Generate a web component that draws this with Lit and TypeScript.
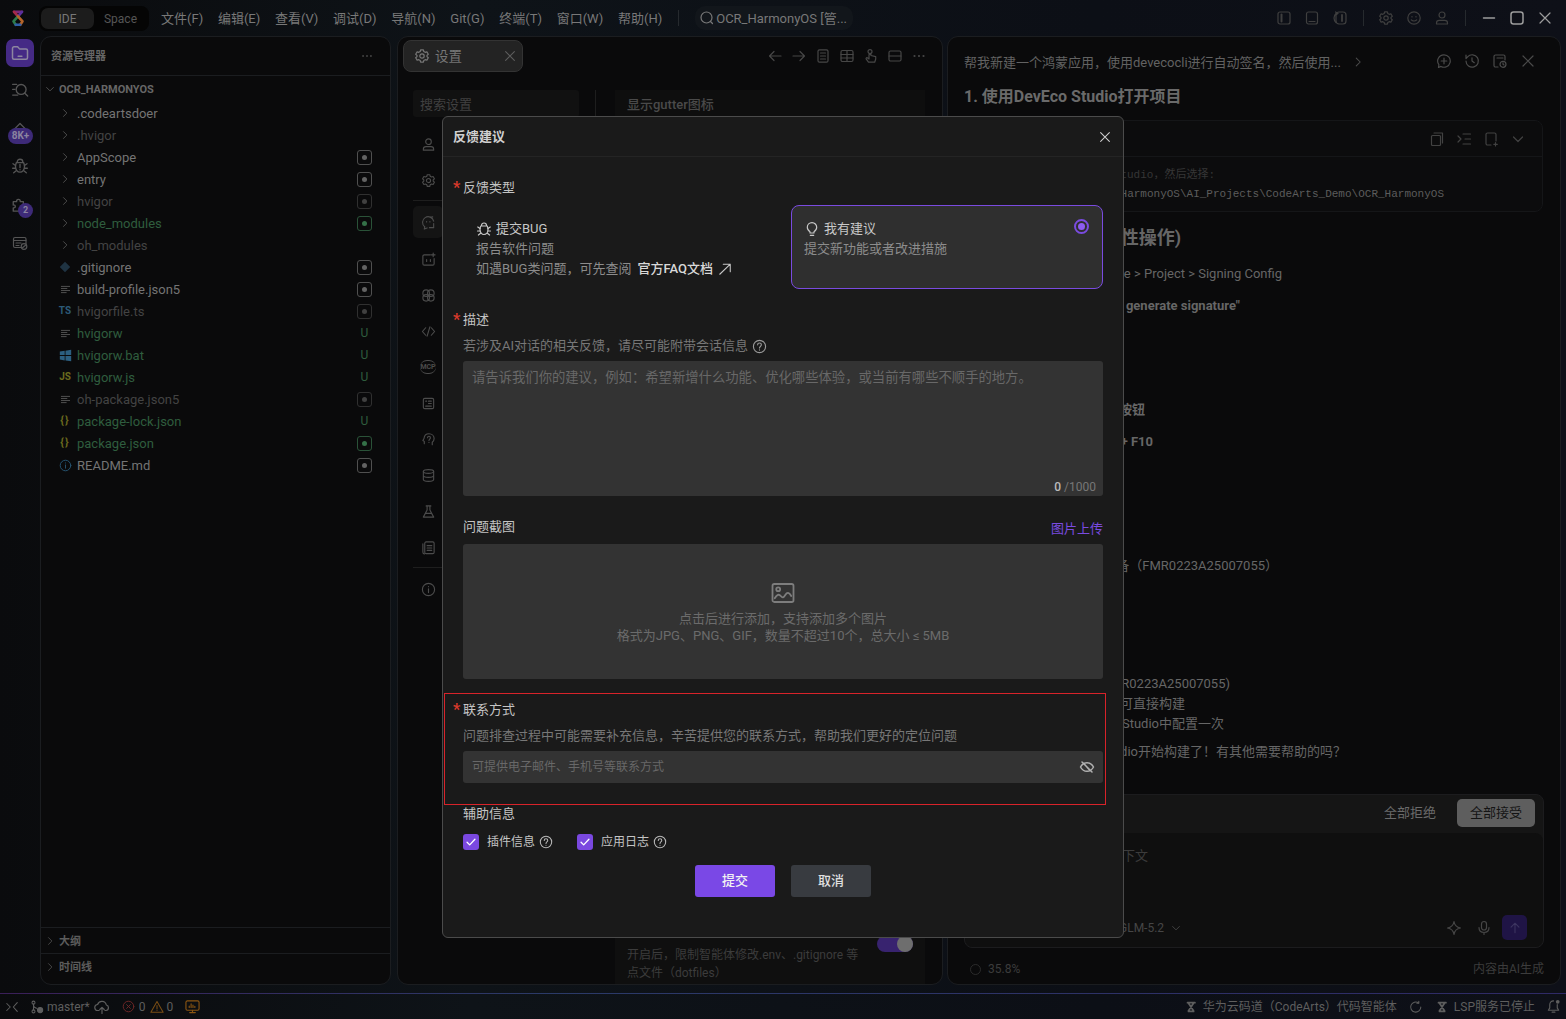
import { LitElement, html, css, svg } from "lit";
import { customElement } from "lit/decorators.js";

const ico = (c: unknown, s = 16) =>
  html`<svg class="ic" width=${s} height=${s} viewBox="0 0 16 16" fill="none" stroke="currentColor" stroke-width="1.2" stroke-linecap="round" stroke-linejoin="round">${c}</svg>`;

const I = {
  right: svg`<path d="M6 3.5 10.5 8 6 12.5"/>`,
  down: svg`<path d="M3.5 6 8 10.5 12.5 6"/>`,
  close: svg`<path d="M3 3l10 10M13 3 3 13"/>`,
  gear: svg`<path d="M6.6 1.8h2.8l.4 1.7 1.4.8 1.7-.5 1.4 2.4-1.3 1.2v1.2l1.3 1.2-1.4 2.4-1.7-.5-1.4.8-.4 1.7H6.6l-.4-1.7-1.4-.8-1.7.5-1.4-2.4 1.3-1.2V7.4L1.7 6.2l1.4-2.4 1.7.5 1.4-.8z"/><circle cx="8" cy="8" r="2.2"/>`,
  folder: svg`<path d="M2 4.2C2 3.5 2.5 3 3.2 3h2.9l1.5 1.7h5.2c.7 0 1.2.5 1.2 1.2v5.9c0 .7-.5 1.2-1.2 1.2H3.2c-.7 0-1.2-.5-1.2-1.2z"/><path d="M6.5 10.5h3"/>`,
  searchList: svg`<circle cx="9" cy="7.5" r="4.4"/><path d="M12.3 10.8 14.8 13.3M1.5 3h3.5M1.5 7.5h2M1.5 12.5h4.5"/>`,
  bug: svg`<path d="M5.5 4.5C5.5 3 6.6 2 8 2s2.5 1 2.5 2.5"/><path d="M4.8 5h6.4c.5 1 .8 2.2.8 3.5 0 2.8-1.8 5-4 5s-4-2.2-4-5c0-1.3.3-2.5.8-3.5z"/><path d="M4 7.5 1.8 6M4 10H1.5M4.6 12.3 2.4 14M12 7.5 14.2 6M12 10h2.5M11.4 12.3 13.6 14"/>`,
  bugAlert: svg`<path d="M5.5 4.5C5.5 3 6.6 2 8 2s2.5 1 2.5 2.5"/><path d="M4.8 5h6.4c.5 1 .8 2.2.8 3.5 0 2.8-1.8 5-4 5s-4-2.2-4-5c0-1.3.3-2.5.8-3.5z"/><path d="M4 7.5 1.8 6M4 10H1.5M4.6 12.3 2.4 14M12 7.5 14.2 6M12 10h2.5M11.4 12.3 13.6 14M8 6.5v3M8 11.2v.2"/>`,
  puzzle: svg`<path d="M2 5h3c-.6-2.4 3.5-3 3.2 0H11v3c2.6-.5 2.6 3.4 0 3v2.5H2v-3c2.4.5 2.4-3 0-2.5z"/>`,
  remote: svg`<rect x="1.5" y="2.5" width="12.5" height="10" rx="1.5"/><path d="M1.5 5.5H14M4 8h5M4 10.5h3"/><circle cx="12" cy="11.5" r="2.8" fill="#0c0e12"/><path d="m10.5 12.8 3-2.6"/>`,
  roof: svg`<path d="M3 9 8 4l5 5"/>`,
  back: svg`<path d="M14 8H2.5M7 3.5 2.5 8 7 12.5"/>`,
  fwd: svg`<path d="M2 8h11.5M9 3.5 13.5 8 9 12.5"/>`,
  doc: svg`<rect x="3" y="1.8" width="10" height="12.4" rx="1.5"/><path d="M5.5 5h5M5.5 8h5M5.5 11h5"/>`,
  grid: svg`<rect x="2" y="2.5" width="12" height="11" rx="1.5"/><path d="M8 2.5v11M2 6.5h12M2 10h12"/>`,
  touch: svg`<circle cx="7" cy="3.6" r="2"/><path d="M6 6.5v4.5L4.3 9.8c-.9-.4-1.6.5-1 1.3L5.5 14.2h6.2l1-3.2V8.6L8 7.5V6.5z"/>`,
  split: svg`<rect x="2" y="3" width="12" height="10" rx="1.5"/><path d="M2 8h12"/>`,
  more: svg`<circle cx="3.5" cy="8" r=".5"/><circle cx="8" cy="8" r=".5"/><circle cx="12.5" cy="8" r=".5"/>`,
  user: svg`<circle cx="8" cy="5" r="3"/><path d="M2.5 14v-1c0-1.6 1.2-2.7 2.8-2.7h5.4c1.6 0 2.8 1.1 2.8 2.7v1z"/>`,
  chat: svg`<path d="M13.5 6.5A6 6 0 1 0 4 12.6L3.5 15l3-1.2"/><path d="M6 7v.5M9.5 7v.5M10 2.5 12.5 2M13.5 9v4.5L9 13.5"/>`,
  robot: svg`<path d="M10 3H3.5C2.7 3 2 3.7 2 4.5v8c0 .8.7 1.5 1.5 1.5h9c.8 0 1.5-.7 1.5-1.5V7"/><path d="M6 8v2M10 8v2M13 1v4M11 3h4"/>`,
  palette: svg`<circle cx="5.5" cy="5.5" r="3.5"/><circle cx="10.5" cy="5.5" r="3.5"/><circle cx="5.5" cy="10.5" r="3.5"/><circle cx="10.5" cy="10.5" r="3.5"/>`,
  code: svg`<path d="M5 4 1.5 8 5 12M11 4l3.5 4L11 12M9.5 3l-3 10"/>`,
  card: svg`<rect x="2.5" y="2.5" width="11" height="11" rx="1.5"/><path d="M5 5.5h1M8 5.5h3M8 8h3M5 10.8h6"/>`,
  brain: svg`<path d="M3.5 12.5V10L2 9l1.2-2C3.5 3.5 6 1.8 8.5 1.8c3 0 5.5 2.2 5.5 5.2 0 2-1 3.3-2 4v2.5"/><path d="M7 6c0-2 3-2 3 0 0 1.5-1.5 1.5-1.5 3M8.5 11v.2"/>`,
  db: svg`<ellipse cx="8" cy="3.7" rx="5.5" ry="2"/><path d="M2.5 3.7v8.6c0 1.1 2.5 2 5.5 2s5.5-.9 5.5-2V3.7M2.5 8c0 1.1 2.5 2 5.5 2s5.5-.9 5.5-2"/>`,
  flask: svg`<path d="M5.5 2h5M6.5 2v4.5L2.5 14h11l-4-7.5V2M5 10h6"/>`,
  docs: svg`<rect x="4" y="2" width="10" height="12.5" rx="1.5"/><path d="M2 4v9c0 1 .7 1.8 1.8 1.8M6.5 6h5M6.5 8.5h5M6.5 11h5"/>`,
  info: svg`<circle cx="8" cy="8" r="6.5"/><path d="M8 7.3v4M8 4.8v.2"/>`,
  plusChat: svg`<path d="M8 1.8a6.2 6.2 0 1 1-3 11.6L2.5 14.5l.4-2.8A6.2 6.2 0 0 1 8 1.8zM8 5.2v5.6M5.2 8h5.6"/>`,
  history: svg`<path d="M2 8a6.2 6.2 0 1 0 1.6-4.2L2 5.5V2M8 4.8V8l2.3 1.7"/>`,
  fileClock: svg`<path d="M6 14H3.5C2.7 14 2 13.3 2 12.5v-9C2 2.7 2.7 2 3.5 2h8c.8 0 1.5.7 1.5 1.5V7M5 5h6"/><circle cx="11" cy="11.3" r="3"/><path d="M11 9.8v1.5l1 .6"/>`,
  copy: svg`<rect x="2.5" y="4.5" width="9" height="10" rx="1"/><path d="M5 2h8.5v10"/>`,
  indent: svg`<path d="M7 3h7.5M7 13h7.5M9 8h5.5M2 5l3 3-3 3"/>`,
  filePlus: svg`<path d="M8 14H4.5C3.7 14 3 13.3 3 12.5v-9C3 2.7 3.7 2 4.5 2h7c.8 0 1.5.7 1.5 1.5V10M12.5 11.5v3.5M10.8 13.3h3.5"/>`,
  panelL: svg`<rect x="2" y="2" width="12" height="12" rx="2"/><path d="M5.5 4.5v7" stroke-width="2"/>`,
  panelB: svg`<rect x="2.5" y="2" width="11" height="12" rx="2"/><path d="M5 11.5h6"/>`,
  panelR: svg`<path d="M4 3.5C3 4.5 2 6 2 8s1 3.5 2 4.5M3.5 2 6 3.5 3.5 5"/><rect x="4" y="2" width="10" height="12" rx="3"/><path d="M10 5v6" stroke-width="1.8"/>`,
  smile: svg`<circle cx="8" cy="8" r="6.2"/><path d="M6 6.5v.5M10 6.5v.5M5.3 9.8c1.5 1.5 3.9 1.5 5.4 0"/>`,
  min: svg`<path d="M2.5 8h11" stroke-width="1.5"/>`,
  max: svg`<rect x="2" y="2" width="12" height="12" rx="2.5" stroke-width="1.5"/>`,
  branch: svg`<circle cx="4" cy="3" r="1.7"/><path d="M4 4.7v6.6"/><circle cx="4" cy="13" r="1.7"/><path d="M4 6c0 2 1.5 3 3.5 3.5"/><circle cx="11.5" cy="11.5" r="3" fill="currentColor"/>`,
  cloud: svg`<path d="M5 11.5H4a3 3 0 0 1-.4-6A4.5 4.5 0 0 1 12.3 6 2.8 2.8 0 0 1 12 11.5h-1M8 14.5V8.5M5.8 10.5 8 8.3l2.2 2.2"/>`,
  err: svg`<circle cx="8" cy="8" r="6.5"/><path d="m5.7 5.7 4.6 4.6M10.3 5.7l-4.6 4.6"/>`,
  warn: svg`<path d="M8 1.8 15 14H1z"/><path d="M8 6.2v4M8 12v.1"/>`,
  monitor: svg`<rect x="1" y="2" width="14" height="10" rx="1.5"/><path d="M4.5 9V7.5M6.5 9V5M8.5 9V6.5M10.5 9V7.8M8 12v2M5 14.5h6"/>`,
  spin: svg`<path d="M5.2 13H11M4 3h8.5M5 3.5 11 12.5M11 3.5 5 12.5" stroke-width="2"/>`,
  refresh: svg`<path d="M13.5 8A5.8 5.8 0 1 1 11 3.3"/><path d="M11.2 1.5v2.2H9"/>`,
  bell: svg`<path d="M8 2a4 4 0 0 0-4 4v3.5L2.5 12h11L12 9.5V6M6.5 14h3"/><circle cx="12.5" cy="3" r="2" fill="currentColor" stroke="none"/>`,
  sparkle: svg`<path d="M8 1.5c.5 3.5 3 6 6.5 6.5-3.5.5-6 3-6.5 6.5C7.5 11 5 8.5 1.5 8 5 7.5 7.5 5 8 1.5z"/>`,
  mic: svg`<rect x="5.5" y="1.5" width="5" height="8.5" rx="2.5"/><path d="M3 7.5c0 3.2 2.2 5 5 5s5-1.8 5-5M8 12.5v2"/>`,
  up: svg`<path d="M8 13.5V2.5M3.5 7 8 2.5 12.5 7"/>`,
  image: svg`<rect x="1" y="2" width="14" height="12" rx="1.2"/><circle cx="4.8" cy="5.5" r="1.3"/><path d="M2.5 11.5c1.5-2.5 2.8-3 4-1.5s1.8 1.2 3-.7 2.5-2 4 .7"/>`,
  eyeOff: svg`<path d="M1.5 8C3 5.2 5.3 3.7 8 3.7s5 1.5 6.5 4.3C13 10.8 10.7 12.3 8 12.3S3 10.8 1.5 8zM5.7 5.5l5 5.8M3 3l10 10" stroke-width="1.5"/>`,
  help: svg`<circle cx="8" cy="8" r="6.5"/><path d="M6 6.2c0-2.6 4-2.6 4 0 0 1.8-2 1.7-2 3.4M8 11.6v.2"/>`,
  check: svg`<path d="m3.5 8.3 3 3 6-6.5" stroke-width="1.5"/>`,
  bulb: svg`<path d="M6 12v-1.3C4.4 9.8 3.3 8.2 3.3 6.3a4.7 4.7 0 0 1 9.4 0c0 1.9-1.1 3.5-2.7 4.4V12zM6.3 14.3h3.4"/>`,
  ne: svg`<path d="M2 14 14 2.5M6 2.5h8V11"/>`,
  logo: svg`<g stroke-width="2.4" fill="none"><path d="M4.5 2.5h7" stroke="#7c2a78"/><path d="M4.5 2.5 8 6.5" stroke="#a52a48"/><path d="M11.5 2.5 8 6.5" stroke="#5a2f9c"/><path d="M8 6.5 4 11l2 3" stroke="#2c7a4c"/><path d="M8 6.5 12 11l-2 3" stroke="#b5652a"/><path d="M6 14h4" stroke="#2f5ea8"/></g>`,
};

type Row = {
  name: string;
  tone?: string;
  dir?: boolean;
  kind?: string;
  mark?: string;
};

const FILES: Row[] = [
  { name: ".codeartsdoer", dir: true },
  { name: ".hvigor", dir: true, tone: "dim" },
  { name: "AppScope", dir: true, mark: "dot" },
  { name: "entry", dir: true, mark: "dot" },
  { name: "hvigor", dir: true, tone: "dim", mark: "dotdim" },
  { name: "node_modules", dir: true, tone: "green", mark: "dotgreen" },
  { name: "oh_modules", dir: true, tone: "dim" },
  { name: ".gitignore", kind: "git", mark: "dot" },
  { name: "build-profile.json5", kind: "lines", mark: "dot" },
  { name: "hvigorfile.ts", kind: "ts", tone: "dim", mark: "dotdim" },
  { name: "hvigorw", kind: "lines", tone: "green", mark: "u" },
  { name: "hvigorw.bat", kind: "win", tone: "green", mark: "u" },
  { name: "hvigorw.js", kind: "js", tone: "green", mark: "u" },
  { name: "oh-package.json5", kind: "lines", tone: "dim", mark: "dotdim" },
  { name: "package-lock.json", kind: "json", tone: "green", mark: "u" },
  { name: "package.json", kind: "json", tone: "green", mark: "dotgreen" },
  { name: "README.md", kind: "info", mark: "dot" },
];

// y is the line's centre in the reference, end its right edge; the start of each line sits under the dialog
const CHAT_LINES = [
  { y: 237, end: 1180, text: "2. 配置签名（一次性操作)", cls: "h" },
  { y: 273, end: 1281, text: "打开 File > Project > Signing Config" },
  { y: 305, end: 1239, text: "勾选 \"Automatically generate signature\"", cls: "b" },
  { y: 409, end: 1144, text: "点击绿色运行按钮", cls: "b" },
  { y: 441, end: 1152, text: "或按 Shift + F10", cls: "b" },
  { y: 565, end: 1277, text: "已连接设备（FMR0223A25007055）" },
  { y: 683, end: 1229, text: "设备：(FMR0223A25007055)" },
  { y: 703, end: 1184, text: "签名已配好，可直接构建" },
  { y: 723, end: 1223, text: "只需在DevEco Studio中配置一次" },
  { y: 751, end: 1345, text: "现在可以在DevEco Studio开始构建了！有其他需要帮助的吗？" },
];

const NAV = [
  I.user, I.gear, null, I.chat, I.robot, I.palette, I.code, "mcp", I.card, I.brain, I.db, I.flask, I.docs, null, I.info,
];

@customElement("feedback-dialog")
export class FeedbackDialog extends LitElement {
  static styles = css`
    :host {
      display: block;
      position: absolute;
      left: 442px;
      top: 116px;
      width: 682px;
      box-sizing: border-box;
      background: #1a1a1a;
      border: 1px solid #4b4b4b;
      border-radius: 6px;
      color: #c4c4c4;
      font-size: 13px;
      line-height: 20px;
    }
    .ic { display: block; flex: none; }
    .head {
      height: 40px;
      box-sizing: border-box;
      display: flex;
      align-items: center;
      justify-content: space-between;
      padding: 0 11px 0 10px;
      border-bottom: 1px solid #242424;
      font-weight: 700;
      color: #d0d0d0;
    }
    .x { color: #d0d0d0; }
    .body { padding: 20px 20px 40px 20px; }
    .label { display: flex; height: 20px; box-sizing: border-box; padding-top: 2px; align-items: center; }
    .req::before {
      content: "*";
      width: 10px;
      margin-left: -10px;
      color: #d8392b;
      font-size: 16px;
      font-weight: 700;
    }
    .cards {
      display: grid;
      grid-template-columns: 312px 312px;
      gap: 16px;
      margin-top: 8px;
    }
    .card {
      height: 84px;
      box-sizing: border-box;
      padding: 13px 12px 0;
      border: 1px solid transparent;
      border-radius: 8px;
      color: #8c8c8c;
    }
    .card.on { background: #2f2f2f; border-color: #7a4be0; }
    .card-title {
      display: flex;
      align-items: center;
      gap: 4px;
      height: 20px;
      color: #c8c8c8;
    }
    .radio {
      width: 15px;
      height: 15px;
      box-sizing: border-box;
      margin-left: auto;
      margin-right: 1px;
      border: 2px solid #7a4be0;
      border-radius: 50%;
      padding: 2px;
      position: relative;
      top: -3px;
    }
    .radio::after {
      content: "";
      display: block;
      width: 7px;
      height: 7px;
      border-radius: 50%;
      background: #8d5cf0;
    }
    .faq-line { display: flex; align-items: center; white-space: pre; }
    .faq { color: #d8d8d8; font-weight: 500; margin-left: 6px; }
    .faq-line .ic { margin-left: 5px; color: #c8c8c8; }
    .mt20 { margin-top: 20px; }
    .hint {
      display: flex;
      align-items: center;
      gap: 4px;
      height: 20px;
      box-sizing: border-box;
      padding-top: 2px;
      margin-top: 6px;
      color: #777;
    }
    .hint .ic { color: #999; }
    .field {
      background: #333;
      border-radius: 3px;
      color: #686868;
      box-sizing: border-box;
    }
    .area {
      height: 135px;
      margin-top: 6px;
      padding: 7px 9px 0;
      display: flex;
      flex-direction: column;
    }
    .ph { font-size: 13.33px; }
    .count { margin-top: auto; margin-bottom: -1px; text-align: right; font-size: 12px; color: #777; margin-right: -2px; }
    .count b { color: #bbb; font-weight: 500; }
    .row-between { display: flex; justify-content: space-between; align-items: flex-end; }
    .link { color: #7a4be0; position: relative; top: 3px; }
    .drop {
      height: 135px;
      margin-top: 8px;
      display: flex;
      flex-direction: column;
      align-items: center;
      padding-top: 37px;
      line-height: 17px;
      color: #6b6b6b;
      text-align: center;
    }
    .drop .ic { color: #7d7d7d; margin-bottom: 5px; }
    .contact {
      margin: 14px -3px 0 -19px;
      padding: 5px 2px 21px 18px;
      border: 1px solid #d8232a;
    }
    .input {
      height: 32px;
      margin-top: 6px;
      padding: 0 9px;
      display: flex;
      align-items: center;
      justify-content: space-between;
      font-size: 12px;
    }
    .input .ic { color: #b0b0b0; margin-right: -1px; }
    .aux { margin-top: -2px; }
    .checks {
      display: flex;
      align-items: center;
      margin-top: 9px;
      height: 20px;
      font-size: 12px;
    }
    .box {
      width: 16px;
      height: 16px;
      border-radius: 3px;
      background: #7a48e0;
      color: #fff;
      display: flex;
      align-items: center;
      justify-content: center;
      margin-right: 8px;
    }
    .checks .q { margin: 0 24px 0 4px; color: #b8b8b8; }
    .actions {
      display: flex;
      justify-content: center;
      gap: 16px;
      margin-top: 13px;
    }
    .btn {
      width: 80px;
      height: 32px;
      border-radius: 3px;
      display: flex;
      align-items: center;
      justify-content: center;
      background: #383b40;
      color: #e0e0e0;
      font-weight: 500;
    }
    .btn.pri { background: #7a48e6; color: #f2f2f2; }
  `;

  render() {
    return html`
      <div class="head"><span>反馈建议</span><span class="x">${ico(I.close, 14)}</span></div>
      <div class="body">
        <div class="label req">反馈类型</div>
        <div class="cards">
          <div class="card">
            <div class="card-title">${ico(I.bug)}提交BUG</div>
            <div>报告软件问题</div>
            <div class="faq-line">如遇BUG类问题，可先查阅<span class="faq">官方FAQ文档</span>${ico(I.ne, 14)}</div>
          </div>
          <div class="card on">
            <div class="card-title">${ico(I.bulb)}我有建议<span class="radio"></span></div>
            <div>提交新功能或者改进措施</div>
          </div>
        </div>

        <div class="label req mt20">描述</div>
        <div class="hint">若涉及AI对话的相关反馈，请尽可能附带会话信息 ${ico(I.help, 15)}</div>
        <div class="field area">
          <div class="ph">请告诉我们你的建议，例如：希望新增什么功能、优化哪些体验，或当前有哪些不顺手的地方。</div>
          <div class="count"><b>0</b> /1000</div>
        </div>

        <div class="row-between mt20">
          <div class="label">问题截图</div>
          <div class="link">图片上传</div>
        </div>
        <div class="field drop">
          ${ico(I.image, 24)}
          <div>点击后进行添加，支持添加多个图片</div>
          <div>格式为JPG、PNG、GIF，数量不超过10个，总大小 ≤ 5MB</div>
        </div>

        <div class="contact">
          <div class="label req">联系方式</div>
          <div class="hint">问题排查过程中可能需要补充信息，辛苦提供您的联系方式，帮助我们更好的定位问题</div>
          <div class="field input">可提供电子邮件、手机号等联系方式 ${ico(I.eyeOff)}</div>
        </div>

        <div class="label aux">辅助信息</div>
        <div class="checks">
          <span class="box">${ico(I.check, 14)}</span>插件信息<span class="q">${ico(I.help, 14)}</span>
          <span class="box">${ico(I.check, 14)}</span>应用日志<span class="q">${ico(I.help, 14)}</span>
        </div>
        <div class="actions">
          <div class="btn pri">提交</div>
          <div class="btn">取消</div>
        </div>
      </div>
    `;
  }
}

@customElement("app-root")
export class AppRoot extends LitElement {
  static styles = css`
    :host {
      display: flex;
      flex-direction: column;
      position: relative;
      width: 1566px;
      height: 1019px;
      overflow: hidden;
      background: linear-gradient(90deg, #0a0b0d 0%, #0e1318 30%, #0c0f16 70%, #0e1018 100%);
      color: #6a6a6a;
      font-family: Roboto, "Noto Sans CJK SC", sans-serif;
      font-size: 13px;
      line-height: 20px;
    }
    .ic { display: block; flex: none; }
    .nm { padding-top: 2px; }

    .titlebar { height: 36px; display: flex; align-items: center; flex: none; color: #787878; }
    .logo { margin-left: 8px; width: 20px; display: flex; justify-content: center; }
    .seg {
      margin-left: 11px;
      width: 110px;
      height: 25px;
      box-sizing: border-box;
      padding: 2px;
      display: flex;
      align-items: center;
      background: #050505;
      border-radius: 8px;
      font-size: 12px;
    }
    .seg span { width: 54px; height: 21px; line-height: 23px; text-align: center; color: #555; }
    .seg .on { background: #1c1c1c; border-radius: 7px; color: #777; }
    .menu { display: flex; gap: 14.75px; margin-left: 12px; padding-top: 2px; }
    .vsep { width: 1px; height: 16px; background: #262a2e; }
    .menu + .vsep { margin-left: 16px; }
    .find {
      margin-left: 16px;
      width: 158px;
      height: 24px;
      box-sizing: border-box;
      padding-left: 4px;
      display: flex;
      align-items: center;
      gap: 1px;
      background: #12161b;
      border-radius: 10px;
      white-space: nowrap;
    }
    .wins { margin-left: auto; margin-right: 13px; display: flex; align-items: center; gap: 12px; color: #3f3f3f; }
    .wins .vsep { margin: 0 3px; }
    .wins .vsep.a { margin: 0 2px 0 3px; }
    .wins .ctl { color: #9c9c9c; }

    .main { flex: 1; min-height: 0; display: flex; }
    .activity {
      width: 40px;
      flex: none;
      display: flex;
      flex-direction: column;
      align-items: center;
      padding-top: 3px;
      color: #555;
      position: relative;
    }
    .act { height: 28px; width: 28px; display: flex; align-items: center; justify-content: center; position: relative; }
    .act.on { background: #452a85; border-radius: 7px; color: #8d86a0; }
    .roof { margin-top: -14px; }
    .k {
      position: absolute;
      left: 2px;
      top: 7px;
      width: 25px;
      height: 16px;
      border-radius: 8px;
      background: #3d2a78;
      color: #8b84a0;
      font-size: 10px;
      font-weight: 700;
      line-height: 16px;
      text-align: center;
    }
    .two {
      position: absolute;
      left: 12px;
      top: 12px;
      width: 15px;
      height: 15px;
      border-radius: 50%;
      background: #3d2a78;
      color: #8b84a0;
      font-size: 9px;
      font-weight: 700;
      line-height: 15px;
      text-align: center;
    }
    .panel {
      background: #0a0a0b;
      border: 1px solid #1b1d20;
      border-radius: 11px;
      box-sizing: border-box;
      height: 949px;
      overflow: hidden;
      flex: none;
    }

    .explorer { width: 351px; display: flex; flex-direction: column; }
    .ex-head {
      height: 39px;
      box-sizing: border-box;
      border-bottom: 1px solid #1b1d20;
      padding: 0 16px 0 10px;
      display: flex;
      align-items: center;
      justify-content: space-between;
      font-size: 11px;
      font-weight: 700;
      color: #666;
    }
    .ex-head .ic { color: #444; }
    .root {
      height: 26px;
      display: flex;
      align-items: center;
      padding-left: 3px;
      gap: 3px;
      font-size: 11px;
      font-weight: 700;
      color: #666;
      white-space: nowrap;
    }
    .root .ic { color: #555; }
    .tree { flex: 1; }
    .row {
      height: 22px;
      display: flex;
      align-items: center;
      padding: 0 18px;
      color: #747474;
      white-space: nowrap;
    }
    .row.dim { color: #434343; }
    .row.green { color: #2f5d3e; }
    .fi {
      width: 12px;
      margin-right: 6px;
      display: flex;
      align-items: center;
      justify-content: center;
      font-size: 10px;
      font-weight: 700;
      color: #525252;
    }
    .fi.ts { color: #2c5a78; }
    .fi.js { color: #6b6b1e; }
    .fi.json { color: #6b6b1e; font-size: 11px; letter-spacing: 1px; }
    .fi.git { color: #1f3342; }
    .fi.win { color: #2c5f80; }
    .fi.blue { color: #25526f; }
    .mark {
      margin-left: auto;
      width: 15px;
      height: 15px;
      box-sizing: border-box;
      border: 1.5px solid #505050;
      border-radius: 3px;
      display: flex;
      align-items: center;
      justify-content: center;
      font-size: 12px;
    }
    .mark::after { content: ""; width: 5px; height: 5px; border-radius: 50%; background: #626262; }
    .mark.dotdim { border-color: #303030; }
    .mark.dotdim::after { background: #404040; }
    .mark.dotgreen { border-color: #2a5238; }
    .mark.dotgreen::after { background: #347048; }
    .mark.u { border: 0; color: #2f5d3e; }
    .mark.u::after { display: none; }
    .sect {
      height: 26px;
      box-sizing: border-box;
      border-top: 1px solid #1b1d20;
      display: flex;
      align-items: center;
      padding-left: 3px;
      gap: 3px;
      font-size: 11px;
      font-weight: 700;
      color: #5c5c5c;
    }
    .sect .ic { color: #4c4c4c; }
    .sect:last-child { height: 31px; padding-bottom: 5px; }

    .settings { width: 546px; margin-left: 6px; display: flex; flex-direction: column; }
    .tabs {
      height: 47px;
      box-sizing: border-box;
      flex: none;
      display: flex;
      align-items: flex-start;
      padding: 3px 15px 0 5px;
    }
    .tab {
      width: 120px;
      height: 32px;
      box-sizing: border-box;
      padding: 0 5px 0 10px;
      display: flex;
      align-items: center;
      gap: 5px;
      background: #232323;
      border: 1px solid #333;
      border-radius: 8px;
      font-size: 13.5px;
      color: #767676;
    }
    .tab .end { margin-left: auto; color: #5e5e5e; }
    .tools { margin-left: auto; height: 32px; display: flex; align-items: center; gap: 8px; color: #474747; }
    .set-body { flex: 1; min-height: 0; display: flex; padding: 6px 17px 0 15px; }
    .side { width: 166px; flex: none; }
    .search {
      height: 27px;
      box-sizing: border-box;
      padding: 1px 0 0 7px;
      background: #111;
      border-radius: 3px;
      line-height: 27px;
      color: #404040;
    }
    .nav { margin-top: 9px; color: #4c4c4c; width: 30px; }
    .nav-i { height: 36px; display: flex; align-items: center; justify-content: center; }
    .nav-i.sel { height: 32px; background: #141414; border-radius: 5px; margin: 5px 0 3px; }
    .nav-d { height: 1px; background: #1e1e1e; margin: 2px 0 3px; }
    .mcp { font-size: 7px; font-weight: 700; line-height: 12px; border-top: 1px solid #4c4c4c; border-bottom: 1px solid #4c4c4c; border-radius: 7px; }
    .v-line { width: 1px; height: 27px; background: #1e1e1e; margin-left: 16px; flex: none; }
    .pane { flex: 1; margin-left: 19px; display: flex; flex-direction: column; }
    .pane-title {
      height: 27px;
      box-sizing: border-box;
      padding: 1px 0 0 12px;
      background: #0e0e0e;
      line-height: 27px;
      font-weight: 500;
      color: #4a4a4a;
    }
    .tail {
      margin-top: auto;
      height: 55px;
      box-sizing: border-box;
      padding: 17px 12px 0;
      background: #0f0f0f;
      display: flex;
      line-height: 18px;
      font-size: 12px;
      color: #3c3c3c;
    }
    .tail p { margin: 0; width: 240px; }
    .toggle {
      margin: -10px 0 0 auto;
      width: 36px;
      height: 16px;
      border-radius: 8px;
      background: #38236f;
      display: flex;
      justify-content: flex-end;
    }
    .toggle::after { content: ""; width: 16px; height: 16px; border-radius: 50%; background: #6e6e6e; }

    .chat { width: 614px; margin-left: 4px; padding: 0 16px; display: flex; flex-direction: column; }
    .chat-head {
      height: 50px;
      flex: none;
      display: flex;
      align-items: center;
      color: #626262;
      white-space: nowrap;
    }
    .chat-head .go { margin-left: 10px; color: #4c4c4c; }
    .chat-tools { margin: 0 8px 2px auto; display: flex; gap: 12px; color: #4a4a4a; }
    .chat h3 { margin: 2px 0 0; height: 16px; line-height: 16px; font-size: 16px; font-weight: 700; color: #6a6a6a; white-space: nowrap; }
    .code {
      margin-top: 15px;
      margin-right: 1px;
      height: 92px;
      flex: none;
      box-sizing: border-box;
      background: #0c0c0d;
      border: 1px solid #151618;
      border-radius: 8px;
      font-family: "Liberation Mono", "Noto Sans CJK SC", monospace;
      font-size: 11px;
    }
    .code-head {
      height: 36px;
      box-sizing: border-box;
      border-bottom: 1px solid #151618;
      display: flex;
      justify-content: flex-end;
      align-items: center;
      gap: 11px;
      padding-right: 16px;
      color: #424242;
    }
    .code-line { text-align: right; line-height: 19px; white-space: nowrap; color: #5c5c5c; }
    .code-line.c { color: #363636; margin-top: 9px; padding-right: 327px; }
    .code-line.p { padding-right: 98px; }
    .ln { height: 20px; box-sizing: border-box; padding-top: 1px; white-space: nowrap; text-align: right; color: #666; }
    .ln.b { font-weight: 700; }
    .ln.h { font-weight: 700; font-size: 18px; }
    .compose {
      margin-top: auto;
      height: 154px;
      flex: none;
      box-sizing: border-box;
      background: #151515;
      border: 1px solid #1c1c1e;
      border-radius: 8px;
      display: flex;
      flex-direction: column;
    }
    .bulk {
      height: 38px;
      box-sizing: border-box;
      flex: none;
      display: flex;
      align-items: center;
      justify-content: flex-end;
      padding: 0 8px 3px 0;
      gap: 21px;
    }
    .accept {
      width: 78px;
      height: 28px;
      border-radius: 5px;
      background: #5e5e5e;
      color: #141414;
      text-align: center;
      line-height: 28px;
    }
    .box-in {
      flex: 1;
      background: #0f0f0f;
      border-radius: 8px;
      display: flex;
      flex-direction: column;
      color: #3c3c3c;
      padding: 12px 0 7px;
    }
    .box-ph { width: 183px; color: #3c3c3c; }
    .box-foot { margin-top: auto; display: flex; align-items: center; color: #464646; padding-right: 16px; }
    .model { margin-left: 154px; font-size: 12px; white-space: nowrap; }
    .box-foot .chev { margin-left: 6px; }
    .box-foot .gap { margin-left: auto; }
    .box-foot .mic { margin-left: 14px; }
    .send {
      margin-left: 10px;
      width: 25px;
      height: 25px;
      border-radius: 5px;
      background: #1f1445;
      color: #3d3560;
      display: flex;
      align-items: center;
      justify-content: center;
    }
    .chat-foot {
      height: 36px;
      box-sizing: border-box;
      padding-top: 6px;
      flex: none;
      display: flex;
      align-items: center;
      font-size: 12px;
      color: #3c3c3c;
    }
    .ring { width: 11px; height: 11px; box-sizing: border-box; border: 1.5px solid #2c2c2c; border-radius: 50%; margin: 0 7px 0 6px; }
    .chat-foot .ai { margin-left: auto; }

    .status {
      height: 26px;
      margin-top: 8px;
      flex: none;
      box-sizing: border-box;
      border-top: 1px solid;
      border-image: linear-gradient(90deg, #3a1f58, #2b3a68 35%, #2f2a66 100%) 1;
      display: flex;
      align-items: center;
      padding: 0 5px;
      font-size: 12px;
      color: #5e5e5e;
      white-space: nowrap;
    }
    .st { display: flex; align-items: center; }
    .br { margin-left: 11px; gap: 3px; }
    .cl { margin-left: 4px; }
    .ml3 { margin-left: 3px; }
    .ml4 { margin-left: 4px; }
    .ml12 { margin-left: 12px; }
    .ml7 { margin-left: 7px; }
    .ml6 { margin-left: 6px; }
    .status .r { margin-left: auto; gap: 5px; }
    .c-err { color: #6e2626; }
    .c-warn { color: #7a4d14; }
    .c-mon { color: #8a5512; }
  `;

  private _activity() {
    const items = [
      { top: 0, on: true, c: ico(I.folder, 20) },
      { top: 9, c: ico(I.searchList, 18) },
      { top: 17, c: html`<span class="roof">${ico(I.roof, 18)}</span><span class="k">8K+</span>` },
      { top: 3, c: ico(I.bugAlert, 18) },
      { top: 11, c: html`${ico(I.puzzle, 18)}<span class="two">2</span>` },
      { top: 10, c: ico(I.remote, 16) },
    ];
    return items.map(
      (a) => html`<div class="act ${a.on ? "on" : ""}" style="margin-top:${a.top}px">${a.c}</div>`
    );
  }

  private _fileIcon(r: Row) {
    if (r.dir) return html`<span class="fi">${ico(I.right, 12)}</span>`;
    switch (r.kind) {
      case "git":
        return html`<span class="fi git">${ico(svg`<path d="M8 1 15 8l-7 7-7-7z" fill="currentColor" stroke="none"/>`, 12)}</span>`;
      case "ts":
        return html`<span class="fi ts">TS</span>`;
      case "js":
        return html`<span class="fi js">JS</span>`;
      case "json":
        return html`<span class="fi json">{}</span>`;
      case "win":
        return html`<span class="fi win">${ico(svg`<path d="M1 3l6-1v5.5H1zM8 2l7-1v6.5H8zM1 8.5h6V14l-6-1zM8 8.5h7V15l-7-1z" fill="currentColor" stroke="none"/>`, 13)}</span>`;
      case "info":
        return html`<span class="fi blue">${ico(I.info, 13)}</span>`;
      default:
        return html`<span class="fi">${ico(svg`<path d="M2 3.5h12M2 6.5h8M2 9.5h12M2 12.5h7" stroke-width="1.4"/>`, 11)}</span>`;
    }
  }

  private _row(r: Row) {
    const mark = r.mark
      ? r.mark === "u"
        ? html`<span class="mark u">U</span>`
        : html`<span class="mark ${r.mark}"></span>`
      : "";
    return html`<div class="row ${r.tone ?? ""}">${this._fileIcon(r)}<span class="nm">${r.name}</span>${mark}</div>`;
  }

  private _nav() {
    return NAV.map((n) => {
      if (n === null) return html`<div class="nav-d"></div>`;
      const on = n === I.chat;
      return html`<div class="nav-i ${on ? "sel" : ""}">
        ${n === "mcp" ? html`<span class="mcp">MCP</span>` : ico(n, 15)}
      </div>`;
    });
  }

  private _chatLines() {
    let prev = 212;
    return CHAT_LINES.map((l) => {
      const gap = l.y - 10 - prev;
      prev = l.y + 10;
      return html`<div class="ln ${l.cls ?? ""}" style="margin-top:${gap}px;width:${l.end - 963}px">${l.text}</div>`;
    });
  }

  render() {
    return html`
      <div class="titlebar">
        <div class="logo">${ico(I.logo, 18)}</div>
        <div class="seg"><span class="on">IDE</span><span>Space</span></div>
        <div class="menu">
          <span>文件(F)</span><span>编辑(E)</span><span>查看(V)</span><span>调试(D)</span><span>导航(N)</span>
          <span>Git(G)</span><span>终端(T)</span><span>窗口(W)</span><span>帮助(H)</span>
        </div>
        <div class="vsep"></div>
        <div class="find">${ico(svg`<circle cx="7.5" cy="7.5" r="5.5"/><path d="m11.5 11.5 2 2"/>`, 16)}<span class="nm">OCR_HarmonyOS [管...</span></div>
        <div class="wins">
          ${ico(I.panelL)}${ico(I.panelB)}${ico(I.panelR)}
          <span class="vsep a"></span>
          ${ico(I.gear)}${ico(I.smile)}${ico(I.user)}
          <span class="vsep"></span>
          <span class="ctl">${ico(I.min)}</span><span class="ctl">${ico(I.max)}</span><span class="ctl">${ico(I.close)}</span>
        </div>
      </div>

      <div class="main">
        <div class="activity">${this._activity()}</div>

        <section class="panel explorer">
          <div class="ex-head"><span class="nm">资源管理器</span>${ico(I.more, 14)}</div>
          <div class="root">${ico(I.down, 12)}<span class="nm">OCR_HARMONYOS</span></div>
          <div class="tree">${FILES.map((f) => this._row(f))}</div>
          <div class="sect">${ico(I.right, 12)}<span class="nm">大纲</span></div>
          <div class="sect">${ico(I.right, 12)}<span class="nm">时间线</span></div>
        </section>

        <section class="panel settings">
          <div class="tabs">
            <div class="tab">${ico(I.gear)}设置<span class="end">${ico(I.close, 14)}</span></div>
            <div class="tools">
              ${ico(I.back)}${ico(I.fwd)}${ico(I.doc)}${ico(I.grid)}${ico(I.touch)}${ico(I.split)}${ico(I.more)}
            </div>
          </div>
          <div class="set-body">
            <div class="side">
              <div class="search">搜索设置</div>
              <div class="nav">${this._nav()}</div>
            </div>
            <div class="v-line"></div>
            <div class="pane">
              <div class="pane-title">显示gutter图标</div>
              <div class="tail">
                <p>开启后，限制智能体修改.env、.gitignore 等 点文件（dotfiles）</p>
                <span class="toggle"></span>
              </div>
            </div>
          </div>
        </section>

        <section class="panel chat">
          <div class="chat-head">
            <span class="nm">帮我新建一个鸿蒙应用，使用devecocli进行自动签名，然后使用...</span>
            <span class="go">${ico(I.right, 14)}</span>
            <div class="chat-tools">${ico(I.plusChat)}${ico(I.history)}${ico(I.fileClock)}${ico(I.close)}</div>
          </div>
          <h3>1. 使用DevEco Studio打开项目</h3>
          <div class="code">
            <div class="code-head">${ico(I.copy)}${ico(I.indent)}${ico(I.filePlus)}${ico(I.down)}</div>
            <div class="code-line c">打开DevEco Studio，然后选择:</div>
            <div class="code-line p">D:\\HarmonyOS\\AI_Projects\\CodeArts_Demo\\OCR_HarmonyOS</div>
          </div>
          ${this._chatLines()}
          <div class="compose">
            <div class="bulk"><span>全部拒绝</span><span class="accept">全部接受</span></div>
            <div class="box-in">
              <div class="ln box-ph">添加上下文</div>
              <div class="box-foot">
                <span class="model">GLM-5.2</span>
                <span class="chev">${ico(I.down, 12)}</span>
                <span class="gap">${ico(I.sparkle, 16)}</span>
                <span class="mic">${ico(I.mic, 16)}</span>
                <span class="send">${ico(I.up, 14)}</span>
              </div>
            </div>
          </div>
          <div class="chat-foot"><span class="ring"></span>35.8%<span class="ai">内容由AI生成</span></div>
        </section>
      </div>

      <div class="status">
        <span class="st">${ico(svg`<path d="M2 4l4 4-4 4M14 3 9.5 8l4.5 5"/>`, 14)}</span>
        <span class="st br">${ico(I.branch, 14)}master*</span>
        <span class="st cl">${ico(I.cloud)}</span>
        <span class="st c-err ml12">${ico(I.err, 13)}</span>
        <span class="st ml4">0</span>
        <span class="st c-warn ml4">${ico(I.warn, 14)}</span>
        <span class="st ml3">0</span>
        <span class="st c-mon ml12">${ico(I.monitor, 15)}</span>
        <span class="st r">
          ${ico(I.spin, 14)}<span>华为云码道（CodeArts）代码智能体</span>
          <span class="ml7">${ico(I.refresh, 14)}</span>
          <span class="ml7">${ico(I.spin, 14)}</span><span>LSP服务已停止</span>
          <span class="ml6">${ico(I.bell, 15)}</span>
        </span>
      </div>

      <feedback-dialog></feedback-dialog>
    `;
  }
}
